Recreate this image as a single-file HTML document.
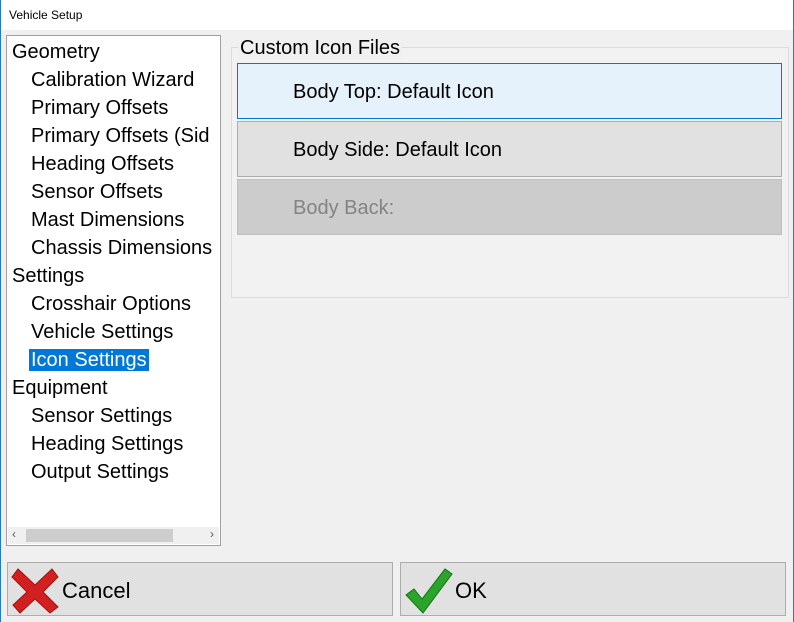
<!DOCTYPE html>
<html><head><style>
*{margin:0;padding:0;box-sizing:border-box}
body{width:794px;height:622px;background:#f0f0f0;font-family:"Liberation Sans",sans-serif;position:relative;overflow:hidden}
.edge{position:absolute;top:0;width:1px;height:622px;background:#1e7ad6}
.title{position:absolute;left:1px;top:0;width:792px;height:30px;background:#fff;font-size:12px;padding:8px 0 0 8px;color:#000}
.tree{position:absolute;left:6px;top:35px;width:215px;height:511px;background:#fff;border:1px solid #a0a0a0}
.it{position:absolute;font-size:20px;line-height:26px;white-space:nowrap;color:#000}
.sel{background:#0078d7;color:#fff;padding:0 2px;margin-left:-2px}
.hs{position:absolute;left:1px;bottom:1px;width:211px;height:17px;background:#f0f0f0}
.thumb{position:absolute;left:18px;top:2px;width:147px;height:13px;background:#cdcdcd}
.grp{position:absolute;left:231px;top:47px;width:558px;height:251px;border:1px solid #dcdcdc;background:#f2f2f2}
.gl{position:absolute;left:238px;top:37px;font-size:20px;background:#f0f0f0;padding:0 2px;color:#000}
.b{position:absolute;left:237px;width:545px;height:56px;font-size:20px;padding:17px 0 0 55px}
.btn{position:absolute;top:562px;height:54px;background:#e1e1e1;border:1px solid #adadad;font-size:22px}
</style></head><body>
<div class="edge" style="left:0"></div><div class="edge" style="left:793px"></div>
<div class="title">Vehicle Setup</div>
<div class="tree">
<div class="it" style="left:5px;top:3px">Geometry</div>
<div class="it" style="left:24px;top:31px">Calibration Wizard</div>
<div class="it" style="left:24px;top:59px">Primary Offsets</div>
<div class="it" style="left:24px;top:87px">Primary Offsets (Sid</div>
<div class="it" style="left:24px;top:115px">Heading Offsets</div>
<div class="it" style="left:24px;top:143px">Sensor Offsets</div>
<div class="it" style="left:24px;top:171px">Mast Dimensions</div>
<div class="it" style="left:24px;top:199px">Chassis Dimensions</div>
<div class="it" style="left:5px;top:227px">Settings</div>
<div class="it" style="left:24px;top:255px">Crosshair Options</div>
<div class="it" style="left:24px;top:283px">Vehicle Settings</div>
<div class="it" style="left:24px;top:311px"><span class="sel">Icon Settings</span></div>
<div class="it" style="left:5px;top:339px">Equipment</div>
<div class="it" style="left:24px;top:367px">Sensor Settings</div>
<div class="it" style="left:24px;top:395px">Heading Settings</div>
<div class="it" style="left:24px;top:423px">Output Settings</div>
<div class="hs"><span style="position:absolute;left:4px;top:0;font-size:12px;color:#555">&#8249;</span><div class="thumb"></div><span style="position:absolute;right:5px;top:0;font-size:12px;color:#555">&#8250;</span></div>
</div>
<div class="grp"></div>
<div class="gl">Custom Icon Files</div>
<div class="b" style="top:63px;background:#e5f1fb;border:1px solid #0078d7">Body Top: Default Icon</div>
<div class="b" style="top:121px;background:#e1e1e1;border:1px solid #adadad">Body Side: Default Icon</div>
<div class="b" style="top:179px;background:#cccccc;border:1px solid #bfbfbf;color:#838383">Body Back:</div>
<div class="btn" style="left:7px;width:386px">
<svg style="position:absolute;left:2px;top:2px" width="50" height="50" viewBox="0 0 50 50"><path d="M8 4 L25 20 L42 4 L48 12 L33 27 L48 42 L40 48 L25 34 L10 48 L3 40 L17 27 L2 12 Z" fill="#d21f1f" stroke="#a01010" stroke-width="1"/></svg>
<span style="position:absolute;left:54px;top:15px">Cancel</span></div>
<div class="btn" style="left:400px;width:386px">
<svg style="position:absolute;left:2px;top:2px" width="50" height="50" viewBox="0 0 50 50"><path d="M3 30 L11 24 L19 34 L42 4 L49 9 L20 48 Z" fill="#2aa52a" stroke="#137013" stroke-width="1"/></svg>
<span style="position:absolute;left:54px;top:15px">OK</span></div>
</body></html>
